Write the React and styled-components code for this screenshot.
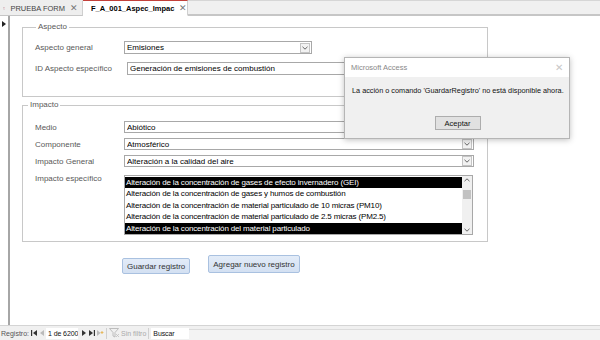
import React from "react";
import styled, { createGlobalStyle } from "styled-components";

const Global = createGlobalStyle`
  html, body { margin: 0; padding: 0; background: #fff; }
  body { font-family: "Liberation Sans", Arial, sans-serif; }
  * { box-sizing: border-box; }
`;

const Screen = styled.div`
  position: relative;
  width: 600px;
  height: 340px;
  overflow: hidden;
  display: flex;
  flex-direction: column;
  background: #fff;
  font-size: 8px;
`;

const TabBar = styled.div`
  height: 16px;
  display: flex;
  align-items: stretch;
  background: #f0f0f0;
  border-top: 1px solid #d6d6d6;
`;

const Tab = styled.div`
  width: ${(p) => p.$w}px;
  display: flex;
  align-items: center;
  gap: 5px;
  padding: 0 4px 0 3px;
  font-size: 7.5px;
  color: ${(p) => (p.$active ? "#000" : "#444")};
  font-weight: ${(p) => (p.$active ? 700 : 400)};
  background: ${(p) => (p.$active ? "#fff" : "#eeeeee")};
  border-top: 1px solid ${(p) => (p.$active ? "#c2403a" : "transparent")};
  border-right: 1px solid #cfcfcf;
  border-bottom: 1px solid ${(p) => (p.$active ? "#fff" : "#c6c6c6")};
  margin-top: -1px;
`;

const TabText = styled.span`
  flex: 1;
  white-space: nowrap;
`;

const TabClose = styled.span`
  color: #777;
  font-size: 9px;
  font-weight: 400;
`;

const TabFill = styled.div`
  flex: 1;
  border-bottom: 2px solid #c6c6c6;
`;

const Body = styled.div`
  flex: 1;
  display: flex;
  min-height: 0;
`;

const Selector = styled.div`
  width: 10px;
  border-right: 2px solid #a6a6a6;
  padding: 4px 0 0 2px;
`;

const FormArea = styled.div`
  flex: 1;
  padding: 6px 0 0 12px;
  display: flex;
  flex-direction: column;
`;

const Group = styled.fieldset`
  width: 466px;
  height: ${(p) => p.$h}px;
  margin: ${(p) => p.$mt}px 0 0 0;
  padding: 0;
  border: 1px solid #c8c8c8;
  min-width: 0;
`;

const Legend = styled.legend`
  margin-left: ${(p) => p.$ml}px;
  padding: 0 2px;
  font-size: 8px;
  line-height: 10px;
  color: #595959;
`;

const Rows = styled.div`
  display: flex;
  flex-direction: column;
  gap: ${(p) => p.$gap}px;
  padding: ${(p) => p.$pt}px 0 0 12px;
`;

const Row = styled.div`
  display: flex;
  align-items: ${(p) => (p.$top ? "flex-start" : "center")};
`;

const Label = styled.div`
  width: 89px;
  color: #595959;
  font-size: 8px;
  white-space: nowrap;
  padding-top: ${(p) => (p.$top ? 2 : 0)}px;
`;

const Field = styled.div`
  width: ${(p) => p.$w}px;
  height: ${(p) => p.$h}px;
  margin-left: ${(p) => p.$indent || 0}px;
  border: 1px solid #a8a8a8;
  background: #fff;
  display: flex;
  align-items: center;
  padding-left: 2px;
  font-size: 8px;
  color: #000;
`;

const FieldText = styled.span`
  flex: 1;
  white-space: nowrap;
  overflow: hidden;
`;

const DropBtn = styled.span`
  width: 10px;
  height: 10px;
  margin-right: 1px;
  border: 1px solid #c4c4c4;
  background: #f2f2f2;
  display: flex;
  align-items: center;
  justify-content: center;
`;

const List = styled.div`
  width: 349px;
  height: 60px;
  margin-top: 3px;
  border: 1px solid #a8a8a8;
  display: flex;
  background: #fff;
`;

const ListItems = styled.div`
  flex: 1;
  display: flex;
  flex-direction: column;
  padding-top: 1px;
`;

const ListItem = styled.div`
  height: 11.4px;
  line-height: 11.4px;
  padding-left: 1px;
  font-size: 8px;
  letter-spacing: -0.15px;
  white-space: nowrap;
  overflow: hidden;
  background: ${(p) => (p.$sel ? "#000" : "transparent")};
  color: ${(p) => (p.$sel ? "#fff" : "#000")};
`;

const ScrollBar = styled.div`
  width: 10px;
  background: #f0f0f0;
  display: flex;
  flex-direction: column;
  align-items: center;
  justify-content: space-between;
  padding: 2px 0;
`;

const Thumb = styled.div`
  width: 8px;
  height: 9px;
  background: #c2c2c2;
  margin-top: -22px;
`;

const Buttons = styled.div`
  display: flex;
  align-items: flex-start;
  gap: 18px;
  padding: 13px 0 0 100px;
`;

const FormButton = styled.button`
  height: ${(p) => p.$h}px;
  margin-top: ${(p) => p.$mt}px;
  padding: 0 4px;
  font-family: inherit;
  font-size: 8px;
  color: #333;
  border: 1px solid #a9c1e0;
  border-radius: 2px;
  background: linear-gradient(#e3ecf8, #d3e0f2);
`;

const NavBar = styled.div`
  height: 15px;
  display: flex;
  align-items: center;
  background: #f0f0f0;
  border-top: 1px solid #d4d4d4;
  font-size: 7px;
  color: #555;
`;

const NavLabel = styled.span`
  padding-left: 1px;
  margin-right: 1px;
  white-space: nowrap;
`;

const NavIcon = styled.span`
  width: 8px;
  display: flex;
  justify-content: center;
`;

const NavInput = styled.div`
  width: ${(p) => p.$w}px;
  height: 11px;
  background: #fff;
  color: #111;
  padding-left: 2px;
  line-height: 11px;
  white-space: nowrap;
  overflow: hidden;
  letter-spacing: -0.1px;
  margin: 0 ${(p) => p.$mr}px 0 ${(p) => p.$ml}px;
`;

const NavSep = styled.span`
  width: 1px;
  height: 11px;
  background: #d0d0d0;
  margin: 0 2px;
`;

const Filter = styled.span`
  display: flex;
  align-items: center;
  gap: 1px;
  color: #aaa;
  white-space: nowrap;
`;

const NavRest = styled.div`
  flex: 1;
  align-self: stretch;
  margin-top: 3px;
  border-top: 1px solid #dcdcdc;
  background: #f3f3f3;
`;

const Dialog = styled.div`
  position: absolute;
  left: 344px;
  top: 57px;
  width: 226px;
  height: 82px;
  border: 1px solid #b5b5b5;
  box-shadow: 0 1px 6px rgba(0, 0, 0, 0.25);
  display: flex;
  flex-direction: column;
  background: #f0f0f0;
`;

const DialogTitle = styled.div`
  height: 19px;
  background: #fff;
  display: flex;
  align-items: center;
  justify-content: space-between;
  padding: 0 6px 0 6px;
  font-size: 7.5px;
  color: #888;
`;

const DialogClose = styled.span`
  color: #c8c8c8;
  font-size: 10px;
`;

const DialogBody = styled.div`
  flex: 1;
  display: flex;
  flex-direction: column;
  align-items: center;
  padding: 9px 6px 0 7px;
`;

const Message = styled.div`
  align-self: flex-start;
  font-size: 7.3px;
  color: #111;
  white-space: nowrap;
`;

const OkButton = styled.button`
  margin-top: 21px;
  width: 46px;
  height: 14px;
  padding: 0;
  font-family: inherit;
  font-size: 7.5px;
  color: #111;
  background: #e1e1e1;
  border: 1px solid #adadad;
`;

const Chevron = () => (
  <svg width="6" height="4" viewBox="0 0 6 4">
    <path d="M0.5 0.8 L3 3.2 L5.5 0.8" stroke="#555" strokeWidth="0.9" fill="none" />
  </svg>
);

const ChevronUp = () => (
  <svg width="6" height="4" viewBox="0 0 6 4">
    <path d="M0.5 3.2 L3 0.8 L5.5 3.2" stroke="#555" strokeWidth="0.9" fill="none" />
  </svg>
);

const FormIcon = () => (
  <svg width="11" height="9" viewBox="0 0 11 9">
    <rect x="0.5" y="0.5" width="10" height="8" fill="#fff" stroke="#a8a8a8" />
    <rect x="1" y="1" width="9" height="2" fill="#d98a9a" />
    <rect x="2" y="4.5" width="3" height="1" fill="#c0c0c0" />
    <rect x="6" y="4.5" width="3" height="1" fill="#d98a9a" />
    <rect x="2" y="6.5" width="3" height="1" fill="#c0c0c0" />
    <rect x="6" y="6.5" width="3" height="1" fill="#d98a9a" />
  </svg>
);

const Triangle = ({ dir = "right", color = "#333" }) => (
  <svg width="4" height="6" viewBox="0 0 4 6">
    {dir === "right" ? (
      <path d="M0 0 L4 3 L0 6 Z" fill={color} />
    ) : (
      <path d="M4 0 L0 3 L4 6 Z" fill={color} />
    )}
  </svg>
);

const FirstIcon = () => (
  <svg width="6" height="6" viewBox="0 0 6 6">
    <rect x="0" y="0" width="1.2" height="6" fill="#333" />
    <path d="M6 0 L2 3 L6 6 Z" fill="#333" />
  </svg>
);

const LastIcon = () => (
  <svg width="6" height="6" viewBox="0 0 6 6">
    <path d="M0 0 L4 3 L0 6 Z" fill="#333" />
    <rect x="4.8" y="0" width="1.2" height="6" fill="#333" />
  </svg>
);

const NewIcon = () => (
  <svg width="7" height="6" viewBox="0 0 7 6">
    <path d="M0 0 L3.5 3 L0 6 Z" fill="#bbb" />
    <path d="M5 1 L5 4 M3.6 2.5 L6.4 2.5" stroke="#e6b85c" strokeWidth="1" />
  </svg>
);

const FunnelIcon = () => (
  <svg width="11" height="10" viewBox="0 0 11 10">
    <path d="M0.5 0.5 L9.5 0.5 L6 4.5 L6 9 L4 8 L4 4.5 Z" fill="none" stroke="#b0b0b0" strokeWidth="0.8" />
    <path d="M7 6 L10 9 M10 6 L7 9" stroke="#c0c0c0" strokeWidth="0.8" />
  </svg>
);

const impactos = [
  { t: "Alteración de la concentración de gases de efecto invernadero (GEI)", sel: true },
  { t: "Alteración de la concentración de gases y humos de combustión" },
  { t: "Alteración de la concentración de material particulado de 10 micras (PM10)" },
  { t: "Alteración de la concentración de material particulado de 2.5 micras (PM2.5)" },
  { t: "Alteración de la concentración del material particulado", sel: true },
];

export default function App() {
  return (
    <>
      <Global />
      <Screen>
        <TabBar>
          <Tab $w={83}>
            <FormIcon />
            <TabText>PRUEBA FORM</TabText>
            <TabClose>✕</TabClose>
          </Tab>
          <Tab $w={105} $active>
            <FormIcon />
            <TabText>F_A_001_Aspec_Impac</TabText>
            <TabClose>✕</TabClose>
          </Tab>
          <TabFill />
        </TabBar>

        <Body>
          <Selector>
            <Triangle color="#222" />
          </Selector>
          <FormArea>
            <Group $h={75} $mt={0}>
              <Legend $ml={13}>Aspecto</Legend>
              <Rows $gap={8} $pt={9}>
                <Row>
                  <Label>Aspecto general</Label>
                  <Field $w={188} $h={13}>
                    <FieldText>Emisiones</FieldText>
                    <DropBtn>
                      <Chevron />
                    </DropBtn>
                  </Field>
                </Row>
                <Row>
                  <Label>ID Aspecto específico</Label>
                  <Field $w={347} $h={13} $indent={3}>
                    <FieldText>Generación de emisiones de combustión</FieldText>
                  </Field>
                </Row>
              </Rows>
            </Group>

            <Group $h={142} $mt={3}>
              <Legend $ml={5}>Impacto</Legend>
              <Rows $gap={5} $pt={11}>
                <Row>
                  <Label>Medio</Label>
                  <Field $w={350} $h={12}>
                    <FieldText>Abiótico</FieldText>
                  </Field>
                </Row>
                <Row>
                  <Label>Componente</Label>
                  <Field $w={350} $h={12}>
                    <FieldText>Atmosférico</FieldText>
                    <DropBtn>
                      <Chevron />
                    </DropBtn>
                  </Field>
                </Row>
                <Row>
                  <Label>Impacto General</Label>
                  <Field $w={350} $h={12}>
                    <FieldText>Alteración a la calidad del aire</FieldText>
                    <DropBtn>
                      <Chevron />
                    </DropBtn>
                  </Field>
                </Row>
                <Row $top>
                  <Label $top>Impacto específico</Label>
                  <List>
                    <ListItems>
                      {impactos.map((it, i) => (
                        <ListItem key={i} $sel={it.sel}>
                          {it.t}
                        </ListItem>
                      ))}
                    </ListItems>
                    <ScrollBar>
                      <ChevronUp />
                      <Thumb />
                      <Chevron />
                    </ScrollBar>
                  </List>
                </Row>
              </Rows>
            </Group>

            <Buttons>
              <FormButton $h={16} $mt={3}>Guardar registro</FormButton>
              <FormButton $h={18} $mt={0}>Agregar nuevo registro</FormButton>
            </Buttons>
          </FormArea>
        </Body>

        <NavBar>
          <NavLabel>Registro:</NavLabel>
          <NavIcon>
            <FirstIcon />
          </NavIcon>
          <NavIcon>
            <Triangle dir="left" color="#bbb" />
          </NavIcon>
          <NavInput $w={32} $ml={0} $mr={2}>1 de 6200</NavInput>
          <NavIcon>
            <Triangle color="#333" />
          </NavIcon>
          <NavIcon>
            <LastIcon />
          </NavIcon>
          <NavIcon>
            <NewIcon />
          </NavIcon>
          <NavSep />
          <Filter>
            <FunnelIcon />
            Sin filtro
          </Filter>
          <NavSep />
          <NavInput $w={38} $ml={0} $mr={0}>Buscar</NavInput>
          <NavRest />
        </NavBar>

        <Dialog>
          <DialogTitle>
            <span>Microsoft Access</span>
            <DialogClose>✕</DialogClose>
          </DialogTitle>
          <DialogBody>
            <Message>La acción o comando 'GuardarRegistro' no está disponible ahora.</Message>
            <OkButton>Aceptar</OkButton>
          </DialogBody>
        </Dialog>
      </Screen>
    </>
  );
}
